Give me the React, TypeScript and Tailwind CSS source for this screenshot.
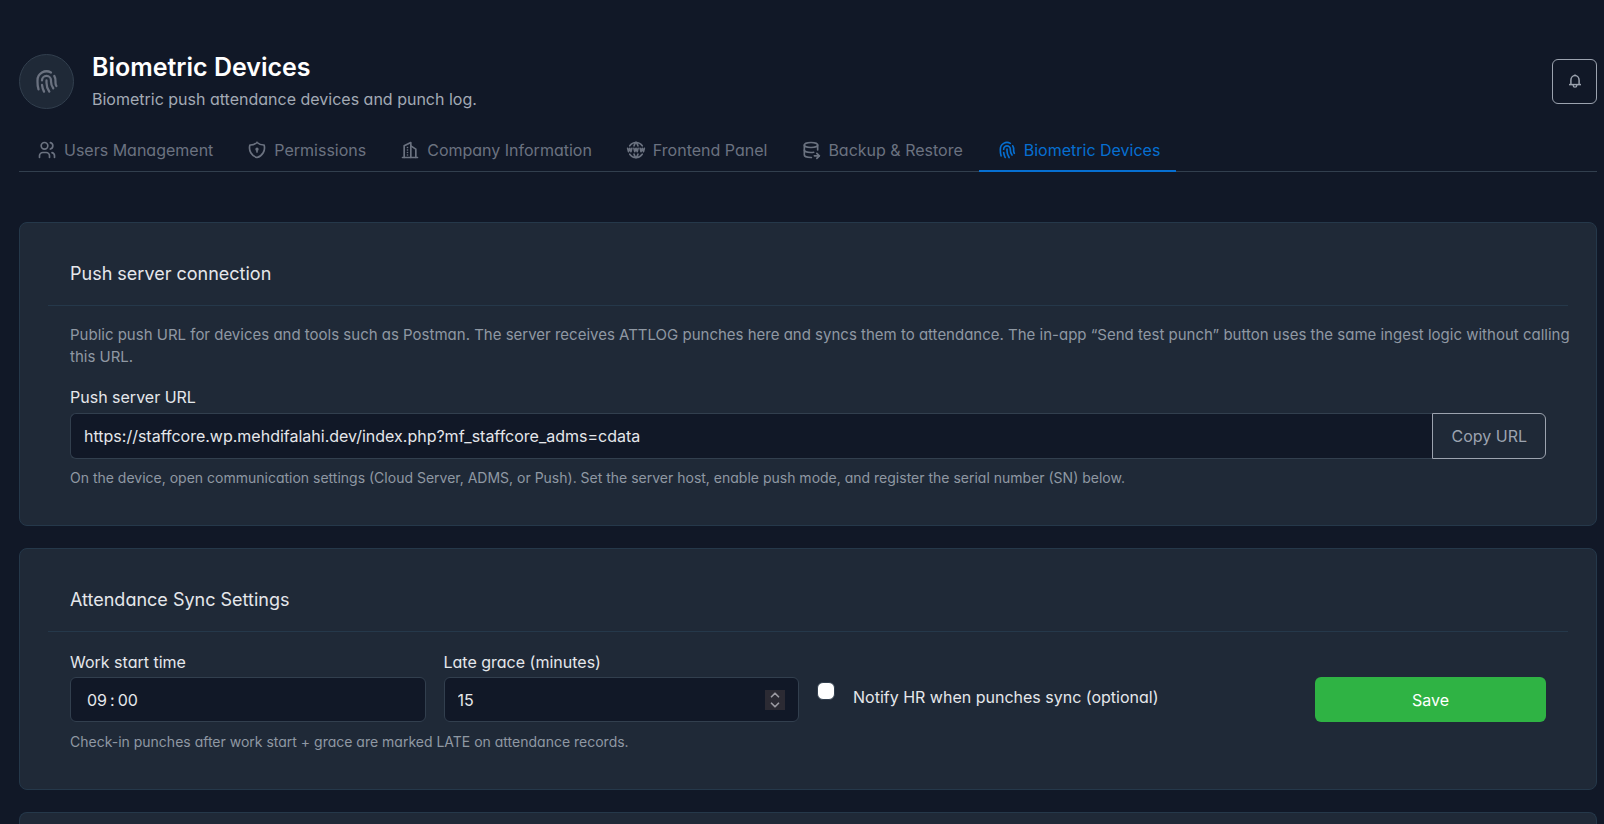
import { ReactElement, ReactNode } from "react";
import {
  TbBuildingSkyscraper,
  TbChevronDown,
  TbChevronUp,
  TbDatabaseExport,
  TbFingerprint,
  TbShieldLock,
  TbUsers,
  TbWorldWww,
} from "react-icons/tb";

type tabType = {
  label: string;
  icon: ReactElement;
  active?: boolean;
};

const tabs: tabType[] = [
  { label: "Users Management", icon: <TbUsers size={20} /> },
  { label: "Permissions", icon: <TbShieldLock size={20} /> },
  { label: "Company Information", icon: <TbBuildingSkyscraper size={20} /> },
  { label: "Frontend Panel", icon: <TbWorldWww size={20} /> },
  { label: "Backup & Restore", icon: <TbDatabaseExport size={20} /> },
  { label: "Biometric Devices", icon: <TbFingerprint size={20} />, active: true },
];

const fieldClass =
  "w-full border border-[#323f4e] bg-[#111827] px-[13px] text-base text-[#e5e7eb] outline-none [font-feature-settings:normal] focus:border-[#066fd1]";

function BellIcon() {
  return (
    <svg width="14" height="14" viewBox="0 0 14 14" fill="none" stroke="currentColor">
      <path d="M2.9 10.3V6.2C2.9 3.6 4.7 1.6 7 1.6s4.1 2 4.1 4.6v4.1" strokeWidth="1.5" />
      <path d="M1 10.6h12" strokeWidth="1.5" />
      <path d="M5.2 11v.6a1.8 1.6 0 0 0 3.6 0V11" strokeWidth="1.3" />
      <path d="M7 .4v1.2" strokeWidth="1.3" />
    </svg>
  );
}

function Card({ title, children }: { title: string; children?: ReactNode }) {
  return (
    <section className="rounded-lg border border-[#25384a] bg-[#1f2937] px-7 pt-7 pb-9">
      <h2 className="border-b border-[#25384a] px-[22px] pt-[10px] pb-[18px] text-lg leading-[26px] text-[#e5e7eb]">
        {title}
      </h2>
      <div className="px-[22px] pt-[18px]">{children}</div>
    </section>
  );
}

export default function App() {
  return (
    <main className="min-h-screen bg-[#111827] pt-[51px] pr-[7px] pl-[19px] font-[Inter,sans-serif] text-base text-[#e5e7eb] [font-feature-settings:'cv03','cv04','cv11']">
      <header className="flex items-center justify-between">
        <div className="flex items-center gap-[18px]">
          <div className="flex size-[55px] items-center justify-center rounded-full border border-[#323f4e] bg-[#1f2937] text-[#6b7280]">
            <TbFingerprint size={27} />
          </div>
          <div>
            <h1 className="text-[25px] leading-8 font-semibold text-white">Biometric Devices</h1>
            <p className="mt-1 leading-6 text-[#a3aab5]">
              Biometric push attendance devices and punch log.
            </p>
          </div>
        </div>
        <button
          type="button"
          aria-label="Notifications"
          className="flex size-[45px] items-center justify-center rounded-md border border-[#9ca3af] text-[#9ca3af]"
        >
          <BellIcon />
        </button>
      </header>

      <nav className="mt-[18px] flex border-b border-[#323f4e]">
        {tabs.map((tab) => (
          <a
            key={tab.label}
            href="#"
            className={
              tab.active
                ? "-mb-px flex h-[43px] items-center gap-[7px] border-b-2 border-[#066fd1] pr-4 pl-[18px] text-[#066fd1]"
                : "-mb-px flex h-[43px] items-center gap-[7px] border-b-2 border-transparent pr-4 pl-[18px] text-[#6b7280]"
            }
          >
            {tab.icon}
            {tab.label}
          </a>
        ))}
      </nav>

      <div className="mt-[50px] flex flex-col gap-[22px]">
        <Card title="Push server connection">
          <p className="-mr-7 text-[15px] leading-[22px] text-[#8f98a3]">
            Public push URL for devices and tools such as Postman. The server receives ATTLOG punches
            here and syncs them to attendance. The in-app “Send test punch” button uses the same
            ingest logic without calling this URL.
          </p>
          <label htmlFor="push-url" className="mt-[17px] mb-1 block leading-6">
            Push server URL
          </label>
          <div className="flex h-[46px]">
            <input
              id="push-url"
              type="text"
              readOnly
              defaultValue="https://staffcore.wp.mehdifalahi.dev/index.php?mf_staffcore_adms=cdata"
              className={`${fieldClass} min-w-0 flex-1 rounded-l-md border-r-0`}
            />
            <button
              type="button"
              className="shrink-0 rounded-r-md border border-[#9ca3af] px-[18px] text-[#9ca3af]"
            >
              Copy URL
            </button>
          </div>
          <p className="mt-2 text-sm leading-[22px] text-[#8f98a3]">
            On the device, open communication settings (Cloud Server, ADMS, or Push). Set the server
            host, enable push mode, and register the serial number (SN) below.
          </p>
        </Card>

        <Card title="Attendance Sync Settings">
          <form
            className="grid grid-cols-12 items-end gap-x-[18px]"
            onSubmit={(e) => e.preventDefault()}
          >
            <div className="col-span-3">
              <label htmlFor="work-start" className="mb-[3px] block leading-6">
                Work start time
              </label>
              <input
                id="work-start"
                type="time"
                defaultValue="09:00"
                className={`${fieldClass} h-[45px] rounded-md [&::-webkit-calendar-picker-indicator]:hidden [&::-webkit-datetime-edit]:pl-0.5 [&::-webkit-datetime-edit-ampm-field]:hidden [&::-webkit-datetime-edit-text]:px-0.5`}
              />
            </div>
            <div className="col-span-3">
              <label htmlFor="late-grace" className="mb-[3px] block leading-6">
                Late grace (minutes)
              </label>
              <div className="relative">
                <input
                  id="late-grace"
                  type="number"
                  defaultValue={15}
                  className={`${fieldClass} h-[45px] rounded-md [appearance:textfield]`}
                />
                <span className="pointer-events-none absolute inset-y-0 right-3.5 my-auto flex size-5 flex-col items-center justify-center bg-[#2b2a33] text-[#9a99a1]">
                  <TbChevronUp size={14} strokeWidth={3} className="-mb-0.5 shrink-0" />
                  <TbChevronDown size={14} strokeWidth={3} className="-mt-0.5 shrink-0" />
                </span>
              </div>
            </div>
            <div className="col-span-4 flex h-[45px] items-start gap-[18px]">
              <input
                id="notify-hr"
                type="checkbox"
                className="mt-[5px] size-[18px] shrink-0 appearance-none rounded-md border border-[#323f4e] bg-white checked:bg-[#066fd1]"
              />
              <label htmlFor="notify-hr" className="mt-2 leading-6">
                Notify HR when punches sync (optional)
              </label>
            </div>
            <button
              type="submit"
              className="col-span-2 h-[45px] rounded-md bg-[#2fb344] text-white [font-feature-settings:normal]"
            >
              Save
            </button>
          </form>
          <p className="mt-[9px] text-sm leading-[22px] text-[#8f98a3]">
            Check-in punches after work start + grace are marked LATE on attendance records.
          </p>
        </Card>

        <div className="h-3 rounded-t-lg border border-b-0 border-[#25384a] bg-[#1f2937]" />
      </div>
    </main>
  );
}
